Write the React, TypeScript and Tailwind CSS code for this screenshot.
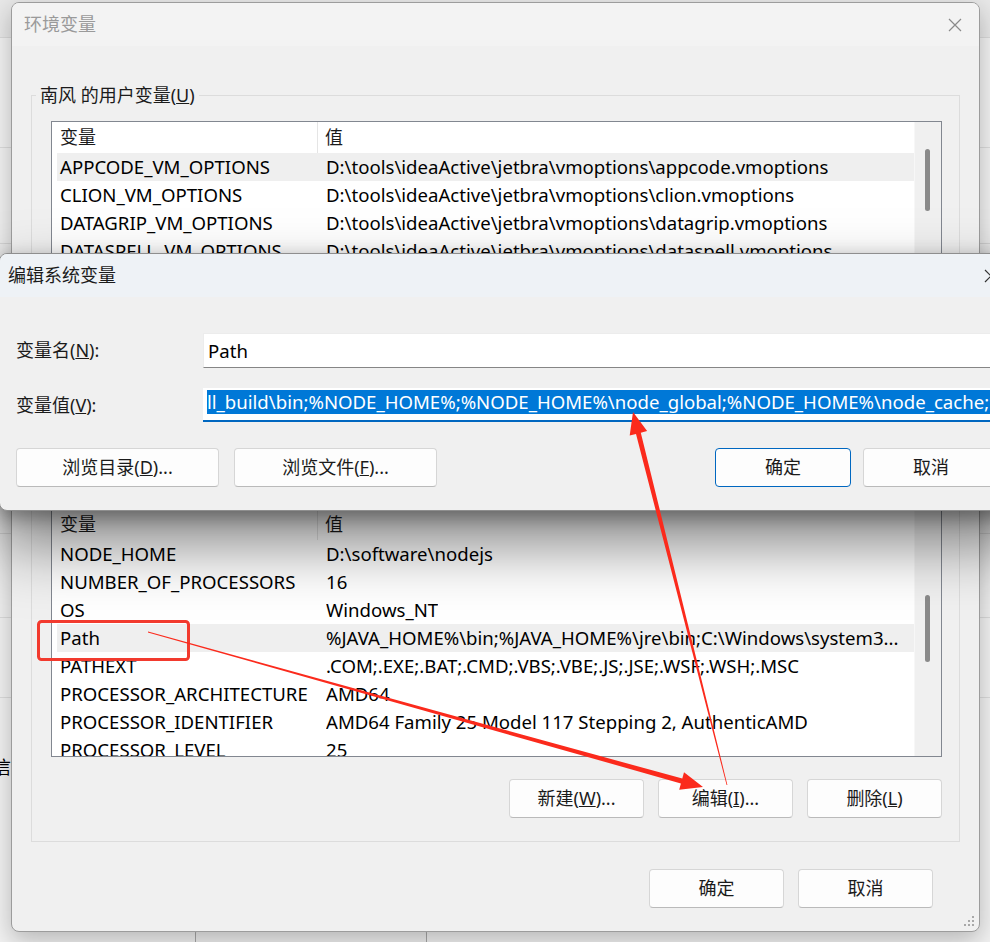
import React from "react";

type Row = { name: string; value: string; selected?: boolean };

const userVars: Row[] = [
  { name: "APPCODE_VM_OPTIONS", value: "D:\\tools\\ideaActive\\jetbra\\vmoptions\\appcode.vmoptions", selected: true },
  { name: "CLION_VM_OPTIONS", value: "D:\\tools\\ideaActive\\jetbra\\vmoptions\\clion.vmoptions" },
  { name: "DATAGRIP_VM_OPTIONS", value: "D:\\tools\\ideaActive\\jetbra\\vmoptions\\datagrip.vmoptions" },
  { name: "DATASPELL_VM_OPTIONS", value: "D:\\tools\\ideaActive\\jetbra\\vmoptions\\dataspell.vmoptions" },
  { name: "GATEWAY_VM_OPTIONS", value: "D:\\tools\\ideaActive\\jetbra\\vmoptions\\gateway.vmoptions" },
  { name: "GOLAND_VM_OPTIONS", value: "D:\\tools\\ideaActive\\jetbra\\vmoptions\\goland.vmoptions" },
  { name: "IDEA_VM_OPTIONS", value: "D:\\tools\\ideaActive\\jetbra\\vmoptions\\idea.vmoptions" },
  { name: "JETBRAINSCLIENT_VM_OPTIONS", value: "D:\\tools\\ideaActive\\jetbra\\vmoptions\\jetbrainsclient.vmoptions" },
];

const systemVars: Row[] = [
  { name: "NODE_HOME", value: "D:\\software\\nodejs" },
  { name: "NUMBER_OF_PROCESSORS", value: "16" },
  { name: "OS", value: "Windows_NT" },
  { name: "Path", value: "%JAVA_HOME%\\bin;%JAVA_HOME%\\jre\\bin;C:\\Windows\\system3...", selected: true },
  { name: "PATHEXT", value: ".COM;.EXE;.BAT;.CMD;.VBS;.VBE;.JS;.JSE;.WSF;.WSH;.MSC" },
  { name: "PROCESSOR_ARCHITECTURE", value: "AMD64" },
  { name: "PROCESSOR_IDENTIFIER", value: "AMD64 Family 25 Model 117 Stepping 2, AuthenticAMD" },
  { name: "PROCESSOR_LEVEL", value: "25" },
  { name: "PROCESSOR_REVISION", value: "7502" },
];

function CloseIcon({ color }: { color: string }) {
  return (
    <svg width="14" height="14" viewBox="0 0 14 14">
      <path d="M1 1 L13 13 M13 1 L1 13" stroke={color} strokeWidth="1.2" fill="none" />
    </svg>
  );
}

function Btn({ children, primary, className }: { children: React.ReactNode; primary?: boolean; className: string }) {
  return (
    <button
      className={
        "h-[39px] shrink-0 rounded-[4px] border bg-[#fdfdfd] text-[18px] text-[#1b1b1b] flex items-center justify-center " +
        (primary ? "border-[#0067c0] " : "border-[#d6d6d6] border-b-[#bababa] ") +
        className
      }
    >
      {children}
    </button>
  );
}

function VarList({ rows, height, thumbTop, thumbHeight }: { rows: Row[]; height: string; thumbTop: number; thumbHeight: number }) {
  return (
    <div className={"flex bg-white border border-[#828790] overflow-hidden " + height}>
      <div className="flex-1 min-w-0 flex flex-col">
        <div className="h-[31px] shrink-0 flex items-center text-[18px] text-[#1b1b1b]">
          <div className="w-[266px] h-full pl-[8px] flex items-center border-r border-[#e5e5e5]">变量</div>
          <div className="pl-[7px]">值</div>
        </div>
        {rows.map((r) => (
          <div
            key={r.name}
            className={"h-[28px] shrink-0 ml-[5px] pl-[3px] flex items-center text-[18.6px] text-black " + (r.selected ? "bg-[#efefef]" : "")}
          >
            <span className="w-[266px] shrink-0 whitespace-nowrap">{r.name}</span>
            <span className="truncate">{r.value}</span>
          </div>
        ))}
      </div>
      <div className="w-[27px] shrink-0 bg-[#f0f0f0] border-l border-[#f7f7f7] relative">
        <div className="absolute left-[10px] w-[5px] rounded-full bg-[#8a8a8a]" style={{ top: thumbTop, height: thumbHeight }} />
      </div>
    </div>
  );
}

function Group({ legend, children, className }: { legend: React.ReactNode; children: React.ReactNode; className: string }) {
  return (
    <fieldset className={"border border-[#dcdcdc] pl-[19px] pr-[17px] " + className}>
      <legend className="-ml-[15px] px-[4px] text-[18px] leading-[24px] text-[#1b1b1b]">{legend}</legend>
      {children}
    </fieldset>
  );
}

export default function App() {
  return (
    <div className="relative w-[990px] h-[942px] overflow-hidden bg-[#e4e4e4] font-['Noto_Sans','Noto_Sans_CJK_SC',sans-serif]">
      {/* window behind */}
      <div className="absolute left-0 top-0 w-[990px] h-[942px] bg-[#f2f2f2] flex flex-col">
        <div className="h-[38px] bg-[#e8e8e8] border-b border-[#dadada]" />
        <div className="h-[110px] border-b border-[#dcdcdc]" />
        <div className="h-[96px] border-b border-[#dcdcdc]" />
        <div className="h-[290px] border-b border-[#dcdcdc]" />
        <div className="h-[84px] border-b border-[#dcdcdc]" />
        <div className="h-[80px] border-b border-[#dcdcdc]" />
        <div className="pt-[56px] text-[18px] text-black -ml-[7px]">信</div>
      </div>
      <div className="absolute left-[195px] top-[928px] w-[232px] h-[30px] rounded-[5px] border border-[#a8a8a8] bg-[#efefef]" />

      {/* 环境变量 */}
      <div className="absolute left-[11px] top-[2px] w-[969px] h-[930px] rounded-[8px] border border-[#9c9c9c] bg-[#f0f0f0] shadow-[0_8px_24px_rgba(0,0,0,0.25)] flex flex-col overflow-hidden">
        <div className="h-[43px] shrink-0 bg-[#f3f3f3] flex items-center justify-between pl-[12px]">
          <span className="text-[18px] text-[#9a9a9a]">环境变量</span>
          <div className="w-[48px] h-[43px] flex items-center justify-center">
            <CloseIcon color="#8a8a8a" />
          </div>
        </div>
        <div className="flex-1 flex flex-col px-[19px] relative">
          <Group
            className="mt-[37px] pb-[23px]"
            legend={
              <>
                南风 的用户变量(<u>U</u>)
              </>
            }
          >
            <div className="mt-[14px]">
              <VarList rows={userVars} height="h-[262px]" thumbTop={27} thumbHeight={62} />
            </div>
            <div className="mt-[15px] flex justify-end gap-[14px]">
              <Btn className="w-[135px]">新建(<u>N</u>)...</Btn>
              <Btn className="w-[135px]">编辑(<u>E</u>)...</Btn>
              <Btn className="w-[135px]">删除(<u>D</u>)</Btn>
            </div>
          </Group>
          <Group
            className="mt-[9px] pb-[23px]"
            legend={
              <>
                系统变量(<u>S</u>)
              </>
            }
          >
            <div className="mt-[14px]">
              <VarList rows={systemVars} height="h-[249px]" thumbTop={86} thumbHeight={67} />
            </div>
            <div className="mt-[22px] flex justify-end gap-[14px]">
              <Btn className="w-[135px]">新建(<u>W</u>)...</Btn>
              <Btn className="w-[135px]">编辑(<u>I</u>)...</Btn>
              <Btn className="w-[135px]">删除(<u>L</u>)</Btn>
            </div>
          </Group>
          <div className="mt-[27px] pr-[27px] flex justify-end gap-[14px]">
            <Btn className="w-[135px]">确定</Btn>
            <Btn className="w-[135px]">取消</Btn>
          </div>
          <svg className="absolute right-[4px] bottom-[4px]" width="12" height="12" viewBox="0 0 12 12">
            <g fill="#a8a8a8">
              <rect x="9" y="1" width="2" height="2" />
              <rect x="5" y="5" width="2" height="2" />
              <rect x="9" y="5" width="2" height="2" />
              <rect x="1" y="9" width="2" height="2" />
              <rect x="5" y="9" width="2" height="2" />
              <rect x="9" y="9" width="2" height="2" />
            </g>
          </svg>
        </div>
      </div>

      {/* 编辑系统变量 */}
      <div className="absolute left-[-1px] top-[253px] w-[1030px] h-[258px] rounded-[8px] border border-[#8e8e8e] bg-[#f0f0f0] shadow-[0_32px_64px_rgba(0,0,0,0.5),0_6px_18px_rgba(0,0,0,0.3)] flex flex-col overflow-hidden">
        <div className="h-[43px] shrink-0 bg-[#eef2f6] flex items-center justify-between pl-[8px] pr-[14px]">
          <span className="text-[18px] text-[#1b1b1b]">编辑系统变量</span>
          <div className="w-[46px] h-[43px] flex items-center justify-center">
            <CloseIcon color="#333333" />
          </div>
        </div>
        <div className="flex flex-col pr-[29px]">
          <div className="mt-[36px] flex items-center">
            <div className="w-[203px] pl-[16px] text-[18px] text-[#1b1b1b]">
              变量名(<u>N</u>):
            </div>
            <div className="flex-1 h-[35px] bg-white border border-[#ececec] border-b-[#868686] pl-[4px] flex items-center text-[18.6px] text-black">
              Path
            </div>
          </div>
          <div className="mt-[20px] flex items-center">
            <div className="w-[203px] pl-[16px] text-[18px] text-[#1b1b1b]">
              变量值(<u>V</u>):
            </div>
            <div className="flex-1 h-[34px] bg-white border-b-2 border-[#0067c0] pl-[4px] pt-[2px] flex items-start overflow-hidden">
              <span className="whitespace-nowrap bg-[#0078d7] text-white text-[18.6px] leading-[24px]">
                ll_build\bin;%NODE_HOME%;%NODE_HOME%\node_global;%NODE_HOME%\node_cache;%MAVEN_HOME%\bin
              </span>
            </div>
          </div>
          <div className="mt-[26px] pl-[16px] flex items-center">
            <Btn className="w-[203px]">
              浏览目录(<u>D</u>)...
            </Btn>
            <Btn className="w-[203px] ml-[15px]">
              浏览文件(<u>F</u>)...
            </Btn>
            <Btn primary className="w-[136px] ml-auto">
              确定
            </Btn>
            <Btn className="w-[136px] ml-[12px]">取消</Btn>
          </div>
        </div>
      </div>

      {/* red annotations */}
      <svg className="absolute left-0 top-0 pointer-events-none" width="990" height="942" viewBox="0 0 990 942">
        <rect x="38.5" y="621.5" width="150" height="38" rx="3" fill="none" stroke="#f23a2e" strokeWidth="3" />
        <polygon
          fill="#fb2a1c"
          points="148.1,631.6 682.3,778.6 684,772.3 703,787 679.2,789.7 680.9,783.4 147.9,632.4"
        />
        <polygon
          fill="#fb2a1c"
          points="727.4,784.9 640.8,432.7 647.1,431.1 633,412 629.7,435.5 636,433.9 726.6,785.1"
        />
      </svg>
    </div>
  );
}
